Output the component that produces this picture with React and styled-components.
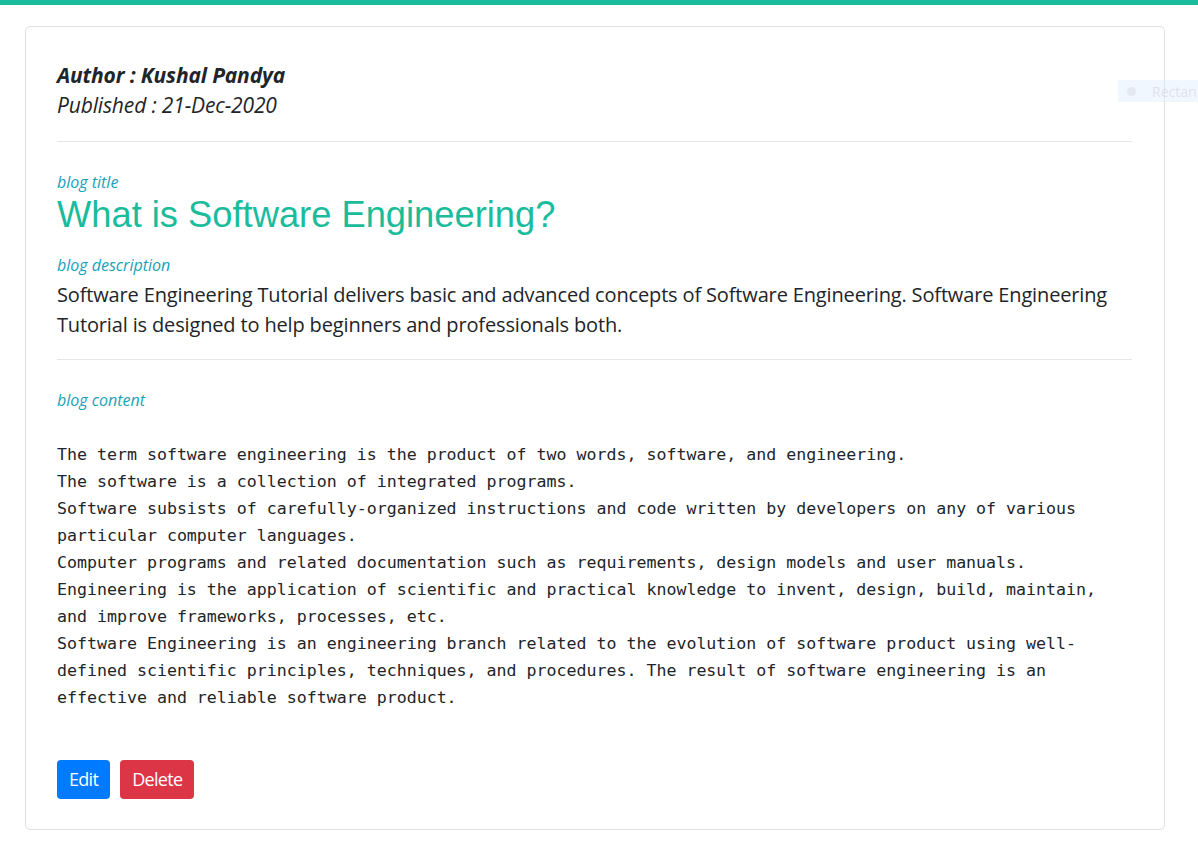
import React from 'react';
import styled, { createGlobalStyle } from 'styled-components';

const GlobalStyle = createGlobalStyle`
  html, body {
    margin: 0;
    padding: 0;
    background: #fff;
  }
  body {
    font-family: "Open Sans", "Noto Sans", sans-serif;
    color: #212529;
  }
  * { box-sizing: border-box; }
`;

const TopBar = styled.div`
  height: 5px;
  background: #1abc9c;
`;

const Page = styled.div`
  position: relative;
  padding: 21px 0 27px 25px;
`;

const Card = styled.article`
  width: 1140px;
  border: 1px solid #dfdfdf;
  border-radius: 5px;
  padding: 33px 32px 30px 31px;
`;

const Meta = styled.div`
  font-size: 21px;
  line-height: 30px;
  font-style: italic;
  letter-spacing: -0.15px;
`;

const AuthorLine = styled.div`
  font-weight: 700;
`;

const Divider = styled.hr`
  border: 0;
  border-top: 1px solid #e6e6e6;
  margin: ${p => p.$top || 22}px 0 ${p => p.$bottom || 28}px;
`;

const Label = styled.div`
  font-size: 16px;
  line-height: 24px;
  font-style: italic;
  color: #17a2b8;
`;

const Title = styled.h1`
  margin: -1px 0 17px;
  font-family: "Liberation Sans", Arial, sans-serif;
  font-weight: 400;
  font-size: 36.3px;
  line-height: 43px;
  color: #1abc9c;
`;

const Description = styled.p`
  margin: 3px 0 0;
  font-size: 20px;
  line-height: 30px;
  letter-spacing: -0.15px;
`;

const Content = styled.pre`
  margin: 29px 0 0;
  font-family: "DejaVu Sans Mono", "Liberation Mono", monospace;
  font-size: 16.6px;
  line-height: 27px;
  white-space: pre-wrap;
  color: #212529;
`;

const Actions = styled.div`
  display: flex;
  gap: 10px;
  margin-top: 49px;
`;

const Button = styled.button`
  font-family: "Open Sans", "Noto Sans", sans-serif;
  font-size: 18px;
  line-height: 27px;
  letter-spacing: -0.7px;
  color: #fff;
  border: 0;
  border-radius: 4px;
  padding: 6px 12px;
  background: ${p => (p.$variant === 'danger' ? '#dc3545' : '#007bff')};
`;

const Ghost = styled.div`
  position: absolute;
  top: 75px;
  right: 0;
  width: 80px;
  height: 22px;
  display: flex;
  align-items: center;
  gap: 16px;
  padding-left: 9px;
  background: rgba(225, 238, 255, 0.45);
  font-size: 14px;
  color: rgba(200, 200, 210, 0.45);
  overflow: hidden;
  white-space: nowrap;
`;

const GhostDot = styled.span`
  width: 9px;
  height: 9px;
  border-radius: 50%;
  background: rgba(215, 218, 228, 0.5);
  flex: none;
`;

const content = `The term software engineering is the product of two words, software, and engineering.
The software is a collection of integrated programs.
Software subsists of carefully-organized instructions and code written by developers on any of various particular computer languages.
Computer programs and related documentation such as requirements, design models and user manuals.
Engineering is the application of scientific and practical knowledge to invent, design, build, maintain, and improve frameworks, processes, etc.
Software Engineering is an engineering branch related to the evolution of software product using well-defined scientific principles, techniques, and procedures. The result of software engineering is an effective and reliable software product.`;

const App = () => (
  <>
    <GlobalStyle />
    <TopBar />
    <Page>
      <Card>
        <Meta>
          <AuthorLine>Author : Kushal Pandya</AuthorLine>
          <div>Published : 21-Dec-2020</div>
        </Meta>

        <Divider $top={21} $bottom={28} />

        <Label>blog title</Label>
        <Title>What is Software Engineering?</Title>

        <Label>blog description</Label>
        <Description>
          Software Engineering Tutorial delivers basic and advanced concepts of Software Engineering. Software Engineering Tutorial is designed to help beginners and professionals both.
        </Description>

        <Divider $top={19} $bottom={28} />

        <Label>blog content</Label>
        <Content>{content}</Content>

        <Actions>
          <Button>Edit</Button>
          <Button $variant="danger">Delete</Button>
        </Actions>
      </Card>
      <Ghost>
        <GhostDot />
        <span>Rectan</span>
      </Ghost>
    </Page>
  </>
);

export default App;
